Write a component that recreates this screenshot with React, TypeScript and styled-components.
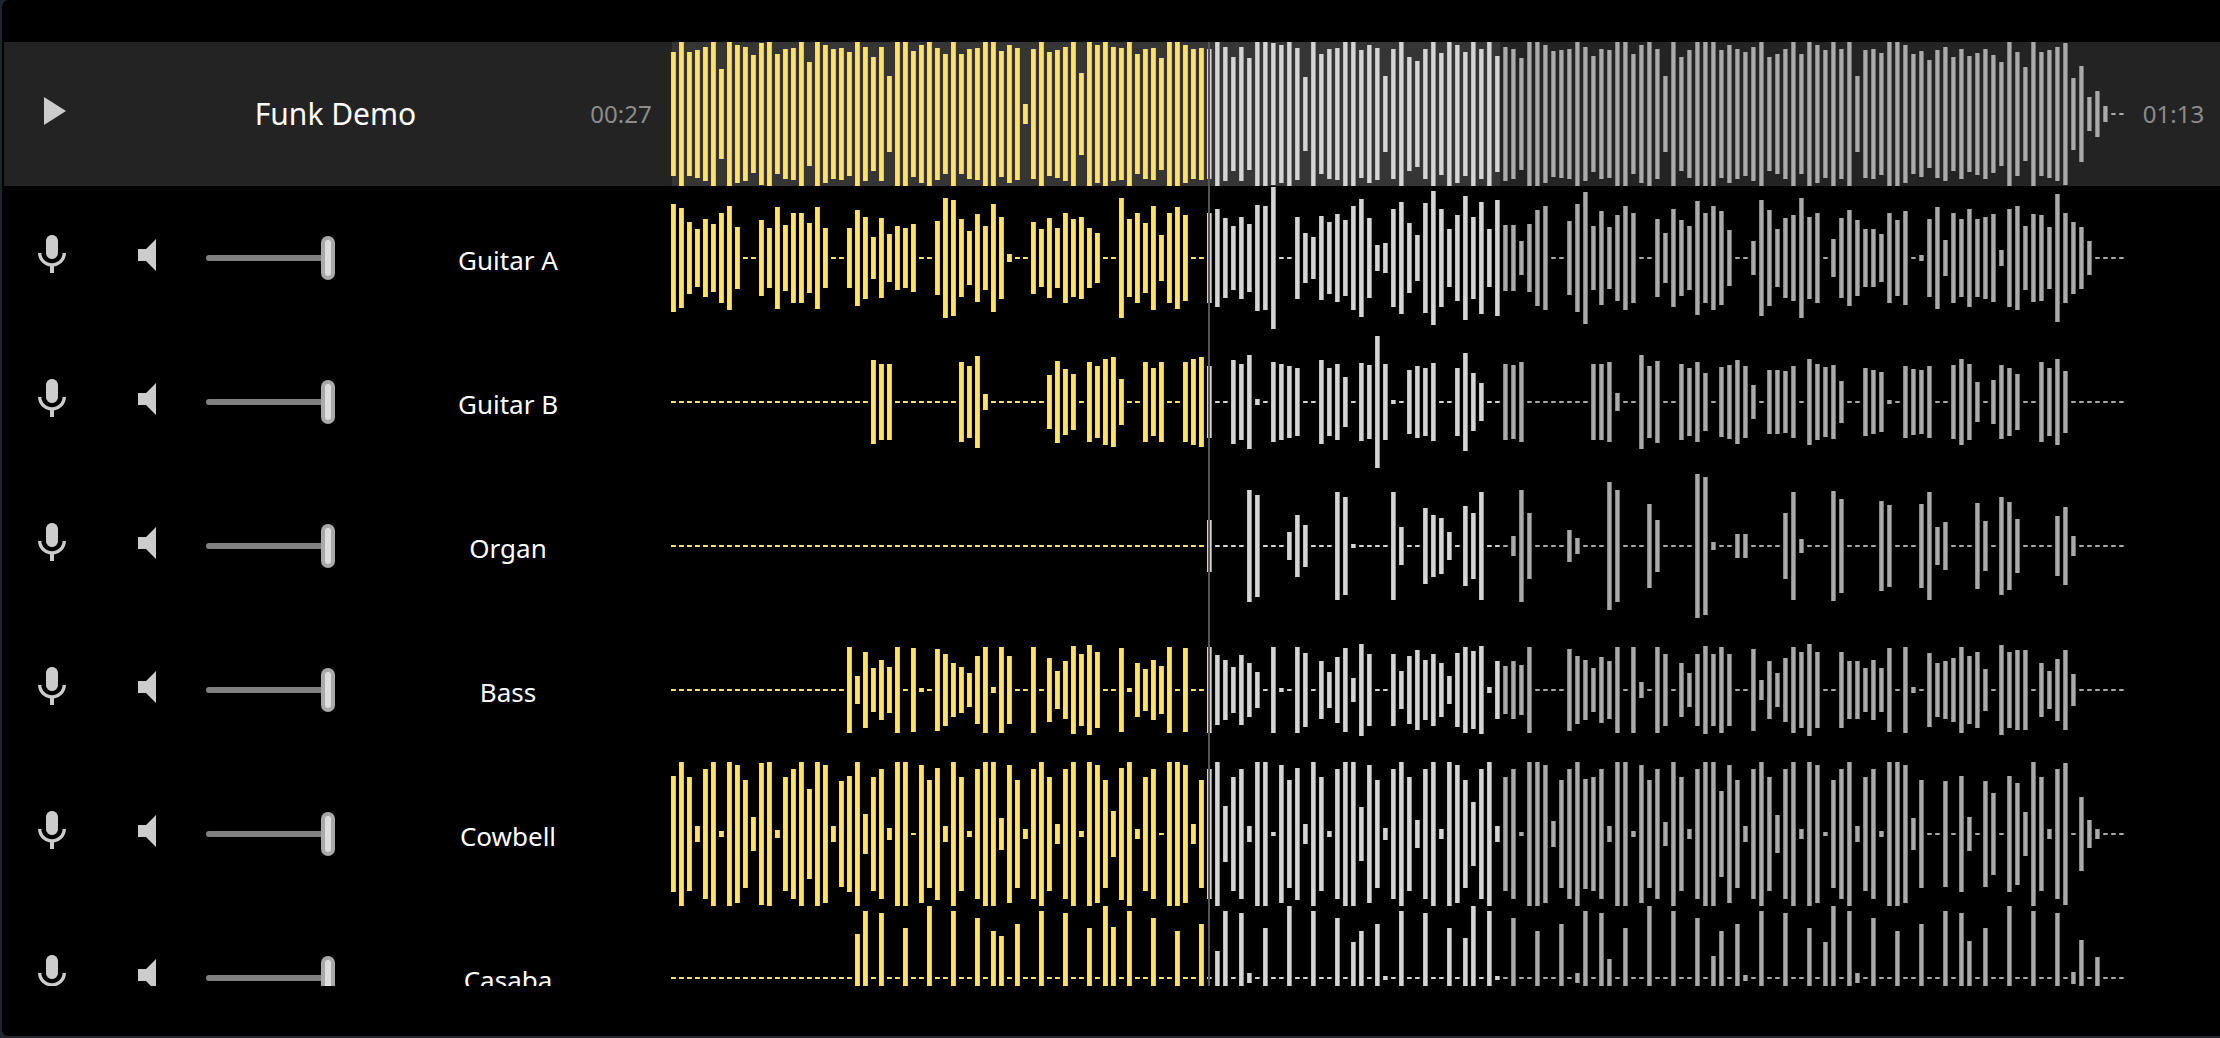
import React from "react";
import styled, { createGlobalStyle } from "styled-components";

const GlobalStyle = createGlobalStyle`
  *, *::before, *::after { box-sizing: border-box; }
  body { margin: 0; background: #1f2530; }
`;

const ROW_HEIGHT = 144;
const PITCH = 8;
const BAR_COUNT = 182;
const WAVE_WIDTH = BAR_COUNT * PITCH;
const PLAYED_BARS = 67;
const LOADED_BARS = 104;

const flat = (count: number): number[] => Array(count).fill(1);

/* Half heights of the bars, one entry per bar. */
const mix: number[] = [
  62, 72, 62, 64, 67, 72, 45, 72, 69, 67, 59, 71, 72, 60, 65, 66, 72, 52, 72, 69, 65, 66, 62, 72, 67, 57, 67,
  38, 72, 72, 63, 69, 72, 66, 60, 72, 60, 65, 66, 72, 72, 63, 69, 66, 10, 65, 72,
  62, 64, 67, 72, 41, 72, 69, 72, 67, 66, 72, 60, 65, 66, 56, 72, 72, 69, 65, 66, 65, 72, 67, 57, 67, 56, 72,
  72, 71, 69, 72, 66, 37, 72, 60, 65, 66, 72, 72, 64, 69, 66, 38, 65, 72, 57, 53,
  65, 72, 61, 72, 69, 62, 72, 65, 72, 58, 67, 65, 56, 72, 72, 69, 63, 64, 65, 72, 67, 58, 65, 64, 72, 72, 60,
  69, 72, 65, 38, 72, 57, 64, 72, 72, 72, 64, 69, 65, 62, 67, 72, 57, 60, 65, 72, 60,
  72, 69, 64, 72, 65, 72, 38, 64, 65, 61, 72, 72, 69, 60, 63, 54, 64, 67, 57, 65, 58, 61, 65, 59, 52, 72, 62,
  47, 72, 62, 64, 67, 71, 36, 48, 17, 23, 8, 1, 1,
];

const guitarA: number[] = [
  54, 50, 36, 29, 39, 34, 45, 52, 31, 1, 1, 38, 30, 51, 33, 45, 45, 35, 51, 30, 1, 1, 30, 48, 41, 21, 40, 24,
  32, 30, 34, 1, 1, 37, 60, 58, 39, 27, 44, 32, 54, 41, 4, 1, 1, 36, 29,
  40, 30, 45, 39, 41, 30, 25, 1, 1, 60, 39, 45, 35, 52, 23, 45, 51, 43, 1, 1, 45, 49, 40, 32, 41, 34, 53, 52,
  71, 1, 1, 41, 25, 21, 42, 36, 44, 38, 52, 59, 40, 13, 15, 49, 56, 35, 23,
  55, 67, 49, 29, 43, 62, 41, 56, 29, 58, 33, 33, 17, 34, 48, 52, 1, 1, 37, 54, 66, 32, 47, 31, 43, 52, 45, 1,
  1, 39, 25, 49, 38, 32, 57, 45, 52, 47, 28, 1, 1, 17, 58, 48, 29, 40, 43, 60,
  41, 45, 1, 19, 40, 48, 38, 29, 29, 24, 45, 38, 47, 1, 3, 39, 51, 18, 45, 39, 49, 39, 41, 44, 8, 49, 52, 32,
  44, 43, 31, 64, 45, 36, 31, 17, 1, 1, 1, 1,
];

const guitarB: number[] = [
  ...flat(25), 42, 38, 38, ...flat(8), 40, 36, 46, 8, ...flat(7),
  27, 41, 33, 28, 1, 40, 36, 43, 45, 23, 1, 1, 40, 34, 40, 1, 1, 40, 43, 45, 36, 1, 1, 42, 38, 47, 3, 1, 40,
  38, 36, 34, 1, 1, 42, 34, 38, 25, 1, 39, 37, 66, 38, 2, 1, 32, 36,
  34, 39, 1, 1, 34, 49, 29, 19, 1, 1, 38, 37, 40, ...flat(8), 38, 38, 40, 9, 1, 1, 47, 36, 41, 1, 1, 38, 34,
  40, 29, 1, 35, 37, 42, 36, 17, 1, 32, 32, 31, 36, 1,
  43, 38, 35, 37, 21, 1, 1, 34, 32, 30, 2, 1, 36, 33, 32, 36, 1, 1, 37, 43, 38, 20, 1, 22, 37, 34, 28, 1, 1,
  40, 34, 43, 31, ...flat(7),
];

const organ: number[] = [
  ...flat(67), 26, ...flat(4), 56, 51, ...flat(3), 14, 31, 21, ...flat(3), 54, 49, 2, ...flat(4), 54, 19, 1, 1,
  38, 31, 28, 14, 1, 40, 33, 54, ...flat(3), 10, 56, 33, ...flat(4), 16, 8, ...flat(3), 64, 56, ...flat(3), 42,
  26, ...flat(4), 72, 69, 4, 1, 1, 12, 12, ...flat(4), 33, 54, 7,
  ...flat(3), 55, 47, ...flat(4), 45, 41, ...flat(3), 42, 54, 19, 24, ...flat(3), 43, 25, 1, 49, 44, 27,
  ...flat(4), 30, 39, 10, ...flat(6),
];

const bass: number[] = [
  ...flat(22), 43, 14, 38, 22, 30, 23, 43, 1, 42, 2, 1, 41, 36, 27, 23, 17, 34, 43, 3, 43, 34, 1, 1, 43, 1,
  32, 19, 29, 44, 36, 45, 38, 1, 1, 42, 2, 27, 21, 30, 24, 43, 1, 42, 1, 1, 43, 35, 30, 23, 35, 27, 18, 1, 43,
  2, 1, 43, 37, 1, 29, 18, 33, 42, 12, 46, 36, 1, 1, 36, 19, 34, 40,
  30, 36, 27, 14, 37, 43, 39, 44, 3, 29, 24, 29, 25, 43, ...flat(4), 41, 34, 30, 22, 33, 29, 43, 1, 43, 8, 1,
  43, 36, 1, 27, 17, 36, 44, 36, 43, 36, 1, 1, 41, 10, 29, 17, 32, 43, 38,
  46, 38, 1, 1, 38, 29, 29, 22, 30, 22, 42, 1, 43, 3, 1, 37, 27, 29, 32, 43, 34, 38, 21, 1, 45, 38, 40, 40, 1,
  27, 19, 31, 40, 16, ...flat(6),
];

const cowbell: number[] = [
  58, 72, 57, 8, 65, 72, 3, 72, 69, 54, 17, 71, 72, 4, 57, 65, 72, 45, 72, 69, 8, 53, 58, 72, 20, 57, 65, 6,
  72, 72, 1, 69, 54, 66, 8, 72, 57, 3, 65, 72, 72, 16, 69, 54, 5, 65, 72,
  57, 10, 65, 72, 3, 72, 69, 54, 23, 66, 72, 5, 57, 65, 1, 72, 72, 69, 10, 54, 65, 72, 28, 57, 65, 8, 72, 72,
  2, 69, 54, 66, 10, 72, 57, 3, 65, 72, 72, 27, 69, 54, 6, 65, 72, 57, 14,
  65, 72, 5, 72, 69, 54, 32, 65, 72, 8, 57, 65, 2, 72, 72, 69, 13, 54, 65, 72, 55, 57, 65, 8, 72, 72, 3, 69,
  54, 65, 12, 72, 57, 5, 65, 72, 72, 43, 69, 54, 8, 65, 72, 57, 19, 65, 72, 5,
  72, 69, 2, 54, 65, 72, 8, 57, 65, 3, 72, 72, 69, 16, 54, 1, 1, 53, 1, 58, 17, 1, 53, 41, 1, 58, 51, 22, 72,
  57, 5, 65, 71, 1, 37, 14, 5, 1, 1, 1,
];

const casaba: number[] = [
  ...flat(23), 44, 67, 1, 65, 1, 1, 50, 1, 1, 72, 1, 1, 67, 1, 1, 60, 1, 47, 42, 1, 54, 1, 1, 67,
  1, 1, 65, 1, 1, 50, 1, 72, 51, 1, 67, 1, 1, 60, 1, 1, 47, 1, 1, 54, 1, 27, 67, 1, 65, 5, 1, 50, 1, 1, 72, 1,
  1, 67, 1, 1, 60, 1, 36, 47, 1, 54, 2, 1, 67, 1, 1,
  65, 1, 1, 50, 1, 40, 72, 1, 67, 2, 1, 60, 1, 1, 47, 1, 1, 54, 1, 5, 67, 1, 65, 19, 1, 50, 1, 1, 72, 1, 1,
  67, 1, 1, 60, 1, 22, 47, 1, 54, 3, 1, 67, 1, 1, 65, 1, 1,
  50, 1, 36, 72, 1, 67, 5, 1, 60, 1, 1, 47, 1, 1, 54, 1, 1, 67, 1, 65, 37, 1, 50, 1, 1, 72, 1, 1, 67, 1, 1,
  65, 1, 6, 38, 1, 21, 1, 1, 1,
];

const tracks = [
  { name: "Guitar A", peaks: guitarA },
  { name: "Guitar B", peaks: guitarB },
  { name: "Organ", peaks: organ },
  { name: "Bass", peaks: bass },
  { name: "Cowbell", peaks: cowbell },
  { name: "Casaba", peaks: casaba },
];

const Player = styled.main`
  display: flex;
  flex-direction: column;
  height: 100vh;
  padding: 42px 0 50px 2px;
  border-left: 2px solid #1f2530;
  border-bottom: 2px solid #1f2530;
  border-radius: 8px 0 0 8px;
  background: #000;
  color: #fff;
  font-family: "Noto Sans", "Open Sans", sans-serif;
`;

const Row = styled.div<{ $master?: boolean }>`
  display: grid;
  grid-template-columns: 667px minmax(0, 1fr) 93px;
  flex: none;
  height: ${ROW_HEIGHT}px;
  background: ${(p) => (p.$master ? "#232323" : "transparent")};
`;

const TrackList = styled.ul`
  flex: 1;
  min-height: 0;
  margin: 0;
  padding: 0;
  overflow: hidden;
  list-style: none;
`;

const Controls = styled.div`
  display: flex;
  align-items: center;
`;

const IconButton = styled.button`
  display: flex;
  align-items: center;
  justify-content: center;
  flex: none;
  width: 96px;
  height: 100%;
  padding: 0 0 6px;
  border: 0;
  background: none;
  color: #ccc;
  cursor: pointer;
`;

const Title = styled.h1`
  flex: 1;
  margin: 0;
  font-size: 30px;
  font-weight: 400;
  line-height: 40px;
  text-align: center;
`;

const Time = styled.time`
  flex: none;
  align-self: center;
  width: 100px;
  color: #8c8c8c;
  font-size: 24px;
  line-height: 32px;
  text-align: center;
`;

const EndTime = styled(Time)`
  width: auto;
`;

const Volume = styled.input`
  flex: none;
  appearance: none;
  width: 129px;
  height: 44px;
  margin: 0 10px;
  background: none;
  cursor: pointer;

  &::-webkit-slider-runnable-track {
    height: 6px;
    border-radius: 3px;
    background: #808080;
  }

  &::-webkit-slider-thumb {
    appearance: none;
    width: 14px;
    height: 44px;
    margin-top: -19px;
    border: 4px solid #aaa;
    border-radius: 7px;
    background: #ddd;
  }
`;

const TrackName = styled.label`
  flex: 1;
  padding-top: 4px;
  font-size: 26px;
  line-height: 36px;
  text-align: center;
`;

const WaveSvg = styled.svg`
  display: block;
  width: 100%;
  height: ${ROW_HEIGHT}px;
`;

const Icon = ({ d }: { d: string }) => (
  <svg width="48" height="48" viewBox="0 0 24 24" fill="currentColor" aria-hidden="true">
    <path d={d} />
  </svg>
);

const PLAY = "M8 5v14l11-7z";
const MIC =
  "M12 14c1.66 0 2.99-1.34 2.99-3L15 5c0-1.66-1.34-3-3-3S9 3.34 9 5v6c0 1.66 1.34 3 3 3zm5.3-3c0 3-2.54 5.1-5.3 5.1S6.7 14 6.7 11H5c0 3.41 2.72 6.23 6 6.72V21h2v-3.28c3.28-.48 6-3.3 6-6.72h-1.7z";
const SPEAKER = "M7 9v6h4l5 5V4l-5 5H7z";

/* One path holding a vertical slice of every bar in [from, to). */
const slice = (peaks: number[], from: number, to: number, offset: number, width: number) =>
  peaks
    .slice(from, to)
    .map((h, i) => `M${(from + i) * PITCH + offset} ${ROW_HEIGHT / 2 - h}h${width}v${h * 2}h${-width}z`)
    .join("");

const zones = [
  { from: 0, to: PLAYED_BARS, left: "#f3d86a", core: "#fde268", right: "#d3c474" },
  { from: PLAYED_BARS, to: LOADED_BARS, left: "#bebebe", core: "#d5d5d5", right: "#8e8e8e" },
  { from: LOADED_BARS, to: BAR_COUNT, left: "#868686", core: "#aaaaaa", right: "#707070" },
];

function Waveform({ peaks, master }: { peaks: number[]; master?: boolean }) {
  const head = PLAYED_BARS * PITCH + 1;
  return (
    <WaveSvg
      viewBox={`0 0 ${WAVE_WIDTH} ${ROW_HEIGHT}`}
      preserveAspectRatio="none"
      shapeRendering="crispEdges"
      aria-hidden="true"
    >
      {master && <rect x="1" width={LOADED_BARS * PITCH - 4} height={ROW_HEIGHT} fill="#353535" />}
      {zones.map((z) => (
        <g key={z.from}>
          <path d={slice(peaks, z.from, z.to, 0, 1)} fill={z.left} />
          <path d={slice(peaks, z.from, z.to, 1, 3)} fill={z.core} />
          <path d={slice(peaks, z.from, z.to, 4, 1)} fill={z.right} />
        </g>
      ))}
      <path d={slice(peaks, PLAYED_BARS, PLAYED_BARS + 1, 0, 1)} fill="#f3d86a" />
      <rect x={head} width="2" height={ROW_HEIGHT} fill="#555" />
    </WaveSvg>
  );
}

export default function App() {
  return (
    <>
      <GlobalStyle />
      <Player>
        <Row $master>
          <Controls>
            <IconButton type="button" aria-label="Play">
              <Icon d={PLAY} />
            </IconButton>
            <Title>Funk Demo</Title>
            <Time>00:27</Time>
          </Controls>
          <Waveform peaks={mix} master />
          <EndTime>01:13</EndTime>
        </Row>
        <TrackList>
          {tracks.map((track, i) => (
            <Row as="li" key={track.name}>
              <Controls>
                <IconButton type="button" aria-label={`Solo ${track.name}`}>
                  <Icon d={MIC} />
                </IconButton>
                <IconButton type="button" aria-label={`Mute ${track.name}`}>
                  <Icon d={SPEAKER} />
                </IconButton>
                <Volume id={`volume-${i}`} type="range" min="0" max="100" defaultValue="100" />
                <TrackName htmlFor={`volume-${i}`}>{track.name}</TrackName>
              </Controls>
              <Waveform peaks={track.peaks} />
            </Row>
          ))}
        </TrackList>
      </Player>
    </>
  );
}
